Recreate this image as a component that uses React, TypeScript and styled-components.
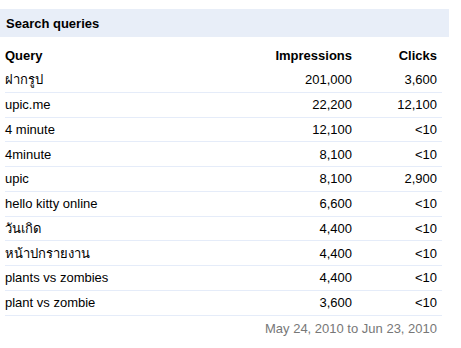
import { Fragment } from "react";
import styled, { createGlobalStyle } from "styled-components";

const GlobalStyle = createGlobalStyle`
  body {
    margin: 0;
    background: #fff;
    font-family: Arial, "Liberation Sans", "Noto Sans", sans-serif;
    font-size: 13px;
    color: #000;
  }
`;

type Row = { query: string; impressions: string; clicks: string };

const rows: Row[] = [
  { query: "ฝากรูป", impressions: "201,000", clicks: "3,600" },
  { query: "upic.me", impressions: "22,200", clicks: "12,100" },
  { query: "4 minute", impressions: "12,100", clicks: "<10" },
  { query: "4minute", impressions: "8,100", clicks: "<10" },
  { query: "upic", impressions: "8,100", clicks: "2,900" },
  { query: "hello kitty online", impressions: "6,600", clicks: "<10" },
  { query: "วันเกิด", impressions: "4,400", clicks: "<10" },
  { query: "หน้าปกรายงาน", impressions: "4,400", clicks: "<10" },
  { query: "plants vs zombies", impressions: "4,400", clicks: "<10" },
  { query: "plant vs zombie", impressions: "3,600", clicks: "<10" },
];

const Panel = styled.div`
  width: 449px;
  padding-top: 9px;
`;

const TitleBar = styled.div`
  height: 28px;
  display: flex;
  align-items: center;
  padding-left: 6px;
  background: #e8eef8;
  font-weight: bold;
  font-size: 13px;
`;

const Table = styled.div`
  margin: 7px 0 0 5px;
  width: 437px;
  display: grid;
  grid-template-columns: 1fr 125px 85px;
`;

const Cell = styled.div<{ $num?: boolean; $head?: boolean; $line?: boolean }>`
  line-height: 15px;
  padding: ${(p) => (p.$head ? "4px 0 4px" : "4.39px 0")};
  padding-right: ${(p) => (p.$num ? "5px" : "0")};
  text-align: ${(p) => (p.$num ? "right" : "left")};
  font-weight: ${(p) => (p.$head ? "bold" : "normal")};
  border-bottom: 1px solid ${(p) => (p.$line ? "#e5ecf9" : "transparent")};
  white-space: nowrap;
`;

const DateRange = styled.div`
  width: 437px;
  margin-left: 5px;
  padding: 5px 5px 0 0;
  box-sizing: border-box;
  text-align: right;
  color: #777;
  line-height: 15px;
`;

export default function App() {
  return (
    <>
      <GlobalStyle />
      <Panel>
        <TitleBar>Search queries</TitleBar>
        <Table>
          <Cell $head>Query</Cell>
          <Cell $head $num>
            Impressions
          </Cell>
          <Cell $head $num>
            Clicks
          </Cell>
          {rows.map((r) => (
            <Fragment key={r.query}>
              <Cell $line>{r.query}</Cell>
              <Cell $num $line>
                {r.impressions}
              </Cell>
              <Cell $num $line>
                {r.clicks}
              </Cell>
            </Fragment>
          ))}
        </Table>
        <DateRange>May 24, 2010 to Jun 23, 2010</DateRange>
      </Panel>
    </>
  );
}
